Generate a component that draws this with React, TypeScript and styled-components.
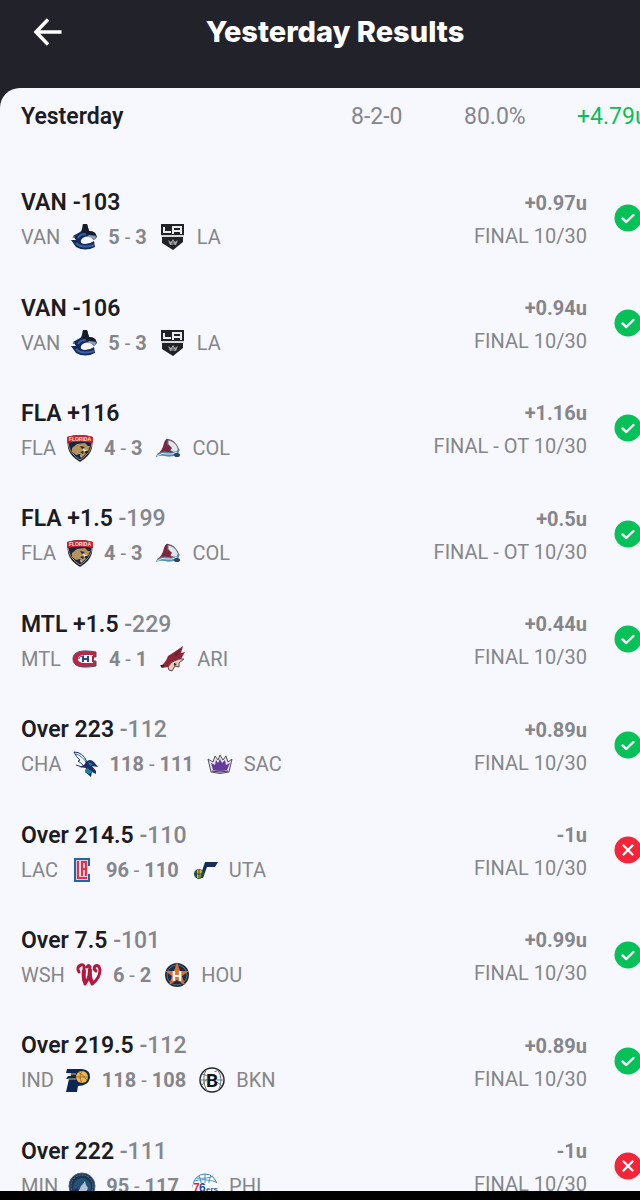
import React from "react";
import styled, { createGlobalStyle } from "styled-components";

const GlobalStyle = createGlobalStyle`
  * { box-sizing: border-box; }
  body { margin: 0; background: #000; font-family: Roboto, "Liberation Sans", sans-serif; }
`;

const Screen = styled.div`
  display: flex;
  flex-direction: column;
  height: 100vh;
  overflow: hidden;
  background: #22222b;
`;

const Header = styled.header`
  display: grid;
  grid-template-columns: 30px 1fr 33px;
  align-items: center;
  height: 64px;
  margin-bottom: 24px;
  padding-left: 33px;
  flex: none;
`;

const BackButton = styled.button`
  display: flex;
  width: 30px;
  height: 30px;
  padding: 0;
  border: 0;
  background: none;
  color: #fff;
`;

const Title = styled.h1`
  margin: 0;
  font-family: Inter, "Open Sans", sans-serif;
  font-size: 29px;
  line-height: 32px;
  font-weight: 800;
  color: #fff;
  text-align: center;
  white-space: nowrap;
`;

const Card = styled.main`
  display: flex;
  flex-direction: column;
  flex: 1;
  min-height: 0;
  overflow: hidden;
  border-top-left-radius: 20px;
  background: #f7f8fd;
`;

const Summary = styled.section`
  display: flex;
  align-items: center;
  flex: none;
  height: 58px;
  margin-bottom: 19px;
  padding-left: 21px;
  font-size: 23px;
  line-height: 28px;
  color: #85868b;
  white-space: nowrap;
`;

const SummaryTitle = styled.h2`
  flex: 1;
  margin: 0;
  font-size: 23px;
  font-weight: 600;
  color: #1c1c22;
`;

const Stat = styled.span<{ $width: number; $positive?: boolean }>`
  flex: none;
  width: ${(p) => p.$width}px;
  ${(p) => p.$positive && "color: #05c158;"}
`;

const Scroller = styled.div`
  flex: 1;
  min-height: 0;
  overflow-x: hidden;
  overflow-y: auto;
  scrollbar-width: none;
`;

const List = styled.ul`
  display: grid;
  grid-auto-rows: 1fr;
  min-height: calc(100% + 28px);
  margin: 0;
  padding: 0;
  list-style: none;
`;

const Row = styled.li`
  display: grid;
  grid-template-columns: 1fr auto 26px;
  align-items: center;
  column-gap: 27px;
  padding-left: 21px;
  white-space: nowrap;
`;

const Bet = styled.div`
  padding-top: 5px;
`;

const Pick = styled.h3`
  margin: 0 0 4px;
  font-size: 23px;
  line-height: 30px;
  font-weight: 600;
  color: #1c1c22;
`;

const Odds = styled.span`
  color: #85868b;
  font-weight: 500;
`;

const Matchup = styled.div`
  display: flex;
  align-items: center;
  gap: 10px;
  height: 30px;
  font-size: 20px;
  color: #85868b;
`;

const Score = styled.span`
  padding-right: 2px;
  font-weight: 700;
`;

const Dash = styled.span`
  font-weight: 400;
`;

const Outcome = styled.div`
  padding-top: 3px;
  text-align: right;
  font-size: 20px;
  line-height: 30px;
  color: #85868b;
`;

const Units = styled.div`
  margin-bottom: 3px;
  font-weight: 700;
`;

const Badge = styled.svg`
  display: block;
  width: 28px;
  height: 28px;
`;

const LogoSvg = styled.svg`
  display: block;
  flex: none;
  width: 28px;
  height: 28px;
`;

const SystemBar = styled.footer`
  flex: none;
  height: 9px;
  background: #000;
`;

const art: Record<string, React.ReactNode> = {
  VAN: (
    <>
      <path d="M10 9Q12 8 13 1H17L19 8Q26 8 27 14L24 17L21 14Q14 12 11 17Q10 21 15 21Q20 21 24 18L25 24Q15 29 6 24L1 17L6 17L3 13Z" fill="#142b58" />
      <path d="M6 20Q12 26 24 22M8 15Q10 11 16 11" fill="none" stroke="#3a61a3" strokeWidth="2" />
      <path d="M12 9L13 1H17L19 8Q25 8 26 12L20 12Z" fill="#161c28" />
      <path d="M19 12L26 13L25 17Q22 14 17 14Z" fill="#8f9db4" />
      <path d="M2 15L5 13L4 15Z" fill="#6d86b4" />
    </>
  ),
  LA: (
    <>
      <path d="M2 1H25V12H2ZM3 14H24V19L14 27L3 20Z" fill="#202225" />
      <path d="M5 4V9H12M14 11V4H22V11M14 8H22" fill="none" stroke="#e9ebed" strokeWidth="2" />
      <path d="M2 13H25" stroke="#b4b7bb" strokeWidth="1" />
      <path d="M9 17L12 19L14 16L16 19L19 17L17 22H11Z" fill="#a3a6aa" />
      <path d="M12 21H16M14 18V22" stroke="#4b4e51" strokeWidth="1" />
    </>
  ),
  FLA: (
    <>
      <path d="M1 3Q14 -1 27 3L26 14Q24 22 14 28Q4 22 2 14Z" fill="#182543" />
      <path d="M1 3Q14 -1 27 3V9Q14 6 1 9Z" fill="#cc2430" />
      <path d="M2 9Q3 19 14 26Q25 19 26 9" fill="none" stroke="#a58a58" strokeWidth="1" />
      <text x="14" y="7" textAnchor="middle" fontFamily="Liberation Sans" fontSize="5" fontWeight="700" fill="#ffe0ce">FLORIDA</text>
      <path d="M6 14L11 10L19 9L22 12L24 12L22 17L18 17L20 20L16 23L14 20L10 21L6 18Z" fill="#b5935b" />
      <path d="M14 12L19 13L16 15ZM18 17L14 18L17 20Z" fill="#192440" />
      <path d="M17 15L21 16L18 18ZM14 21L16 22L15 24Z" fill="#f7edd8" />
    </>
  ),
  COL: (
    <>
      <path d="M3 20Q8 18 10 9Q12 4 14 5Q22 6 25 16Q23 21 18 20Q13 16 4 21Z" fill="#7d263e" />
      <path d="M14 6Q21 7 24 14Q25 19 19 18Q16 17 13 13L14 10Z" fill="#dfe6ee" stroke="#568099" strokeWidth="1" />
      <path d="M14 10L18 14L15 18L10 17Z" fill="#7d263e" />
      <path d="M2 22Q7 16 14 18Q20 20 26 15L24 20Q17 24 11 22Q6 21 2 23Z" fill="#568bab" />
      <path d="M3 22Q8 18 13 20Q18 21 23 18" fill="none" stroke="#dce8f1" strokeWidth="1" />
      <ellipse cx="23" cy="21" rx="3" ry="2" fill="#27465b" />
    </>
  ),
  MTL: (
    <>
      <path d="M25 7V12H22Q20 10 15 10Q8 10 8 14Q8 18 15 18Q20 18 22 16H25V21Q2 25 2 14Q2 3 25 7Z" fill="#c02440" stroke="#42507e" strokeWidth="1" />
      <path d="M7 14Q7 10 14 10H22V18H14Q7 18 7 14Z" fill="#f6f7fb" />
      <path d="M12 11V17M17 11V17M12 14H17" stroke="#294882" strokeWidth="2" />
      <path d="M22 11V17" stroke="#b71f3b" strokeWidth="2" />
      <path d="M8 14Q8 11 13 11" fill="none" stroke="#294882" strokeWidth="1" />
    </>
  ),
  ARI: (
    <>
      <path d="M2 21Q7 17 9 11Q14 8 24 1L22 8L26 7L22 14L18 16L12 18L9 22L3 23Z" fill="#8c2537" />
      <path d="M13 17L20 14L25 14L20 18L20 22L16 21L13 26L10 25L9 22Z" fill="#e2cdb8" stroke="#6b4247" strokeWidth="1" />
      <path d="M15 10L21 4L18 11Z" fill="#64202c" />
      <path d="M15 18L18 19L15 21Z" fill="#242027" />
      <path d="M1 20L5 20L3 23Z" fill="#20242b" />
    </>
  ),
  CHA: (
    <>
      <path d="M2 2Q11 2 15 12L17 15L13 17Q8 12 6 11L8 10Q4 7 2 2Z" fill="#f5fafb" stroke="#242d65" strokeWidth="1" />
      <path d="M4 4Q11 6 15 14" fill="none" stroke="#2d82a1" strokeWidth="1" />
      <path d="M14 12Q18 8 22 12L26 17L20 16L24 21V24L20 22L19 27L13 22L14 18L7 17L12 15Z" fill="#1c2e65" />
      <path d="M16 12L21 14L18 16ZM15 18L21 22L17 24L13 22Z" fill="#1685a0" />
      <path d="M10 17L4 15" fill="none" stroke="#26325e" strokeWidth="1" />
    </>
  ),
  SAC: (
    <>
      <path d="M2 9L7 12L9 6L12 10L14 5L17 10L20 6L22 12L26 9L23 22Q14 25 5 22Z" fill="#e4e1e8" stroke="#535059" strokeWidth="1" />
      <path d="M5 13L9 15L10 10L12 13L14 9L16 13L19 10L20 15L24 13L21 20Q14 22 7 20Z" fill="#663b9d" />
      <path d="M6 21Q14 23 22 21" fill="none" stroke="#353139" strokeWidth="1" />
    </>
  ),
  LAC: (
    <>
      <path d="M6 2H22V10H19V18H22V26H6Z" fill="#1b68aa" />
      <path d="M8 4H20V24H8Z" fill="#f5c3ce" />
      <path d="M10 5V22H19M14 20V6H18V20M14 13H18" fill="none" stroke="#e0304c" strokeWidth="2" />
      <path d="M12 5V20" stroke="#fff" strokeWidth="1" />
    </>
  ),
  UTA: (
    <>
      <path d="M14 6H27L24 11H16L12 22H10L11 15Z" fill="#142e57" />
      <ellipse cx="8" cy="18" rx="5" ry="5" fill="#24513d" />
      <path d="M6 14Q9 12 11 15L9 22L6 22Z" fill="#eab32e" />
      <path d="M8 13V23M3 18H12" fill="none" stroke="#274c50" strokeWidth="1" />
    </>
  ),
  WSH: (
    <>
      <path d="M4 11Q1 6 6 4Q10 3 9 9Q8 17 10 23Q15 17 15 6Q14 3 12 6M15 6Q14 16 17 23Q25 17 25 9Q24 3 20 5Q18 8 21 10" fill="none" stroke="#b4173b" strokeWidth="3" strokeLinecap="round" strokeLinejoin="round" />
      <path d="M9 9Q8 17 10 21M15 8Q14 16 17 21" fill="none" stroke="#b4173b" strokeWidth="4" />
    </>
  ),
  HOU: (
    <>
      <circle cx="14" cy="14" r="12" fill="#182e4b" />
      <circle cx="14" cy="14" r="10" fill="none" stroke="#6b6a69" strokeWidth="1" />
      <path d="M14 1L17 10H26L19 15L22 24L14 19L6 24L9 15L2 10H11Z" fill="#dd702b" />
      <text x="14" y="20" textAnchor="middle" fontFamily="Liberation Sans" fontSize="14" fontWeight="700" fill="#fff">H</text>
    </>
  ),
  IND: (
    <>
      <path d="M3 3H18Q27 4 26 12Q24 20 14 20L13 26H2L5 13H2L4 10H7V7H2Z" fill="#0d2852" />
      <circle cx="18" cy="11" r="6" fill="#f3b748" />
      <path d="M12 11H24M18 5Q14 11 18 17M14 6Q20 9 23 14" fill="none" stroke="#9b733c" strokeWidth="1" />
      <path d="M4 8H12M4 13H12" fill="none" stroke="#e1b450" strokeWidth="1" />
    </>
  ),
  BKN: (
    <>
      <circle cx="14" cy="14" r="12" fill="#f7f8fa" stroke="#23282b" strokeWidth="1.5" />
      <path d="M4 8Q12 10 24 20M20 4Q12 8 4 19M2 14H26M8 4Q3 14 9 25M20 4Q26 14 20 25" fill="none" stroke="#69757b" strokeWidth="1" />
      <rect x="9" y="6" width="10" height="16" rx="2" fill="#f7f8fa" />
      <text x="14" y="21" textAnchor="middle" fontFamily="Roboto" fontSize="19" fontWeight="700" fill="#101619">B</text>
    </>
  ),
  MIN: (
    <>
      <circle cx="14" cy="14" r="13" fill="#1b3453" stroke="#4a5e72" strokeWidth="1" />
      <circle cx="14" cy="14" r="11" fill="none" stroke="#60788e" strokeWidth="1" strokeDasharray="2 1" />
      <circle cx="14" cy="15" r="9" fill="#245178" />
      <path d="M9 23L13 14L15 12L17 9L18 13L20 16L18 20L19 24Z" fill="#b2c2cf" />
      <path d="M6 18L10 16L9 22Z" fill="#162c43" />
    </>
  ),
  PHI: (
    <>
      <circle cx="14" cy="14" r="12" fill="#fff" stroke="#3782bd" strokeWidth="1" />
      <path d="M3 9Q14 6 25 10M14 2V26M5 6Q17 7 22 4M6 22Q14 19 22 22M8 4Q12 11 9 24M20 4Q16 9 19 24" fill="none" stroke="#4d91c5" strokeWidth="1" />
      <rect x="2" y="11" width="25" height="9" fill="#fff" />
      <text x="2" y="20" fontFamily="Liberation Sans" fontSize="12" fontWeight="700" fill="#e31e45">7</text>
      <text x="8" y="20" fontFamily="Liberation Sans" fontSize="12" fontWeight="700" fill="#17539e">6</text>
      <text x="15" y="20" fontFamily="Liberation Sans" fontSize="8" fontWeight="700" fill="#17539e">ers</text>
    </>
  ),
};

function Logo({ team }: { team: string }) {
  return <LogoSvg viewBox="0 0 28 28" aria-hidden="true">{art[team]}</LogoSvg>;
}

function Status({ won }: { won: boolean }) {
  return (
    <Badge viewBox="0 0 28 28" role="img" aria-label={won ? "Won" : "Lost"}>
      <circle cx="14" cy="14" r="13.5" fill={won ? "#05c158" : "#f42538"} />
      <path
        d={won ? "M8.5 14.5L12.3 18L19.5 11" : "M9.5 9.5L18.5 18.5M18.5 9.5L9.5 18.5"}
        fill="none"
        stroke="#fff"
        strokeWidth="2.4"
        strokeLinecap="round"
        strokeLinejoin="round"
      />
    </Badge>
  );
}

type BetResult = {
  pick: string;
  odds?: string;
  away: string;
  home: string;
  score: [number, number];
  units: string;
  status?: string;
  won?: boolean;
};

const bets: BetResult[] = [
  { pick: "VAN -103", away: "VAN", home: "LA", score: [5, 3], units: "+0.97u" },
  { pick: "VAN -106", away: "VAN", home: "LA", score: [5, 3], units: "+0.94u" },
  { pick: "FLA +116", away: "FLA", home: "COL", score: [4, 3], units: "+1.16u", status: "FINAL - OT 10/30" },
  { pick: "FLA +1.5", odds: "-199", away: "FLA", home: "COL", score: [4, 3], units: "+0.5u", status: "FINAL - OT 10/30" },
  { pick: "MTL +1.5", odds: "-229", away: "MTL", home: "ARI", score: [4, 1], units: "+0.44u" },
  { pick: "Over 223", odds: "-112", away: "CHA", home: "SAC", score: [118, 111], units: "+0.89u" },
  { pick: "Over 214.5", odds: "-110", away: "LAC", home: "UTA", score: [96, 110], units: "-1u", won: false },
  { pick: "Over 7.5", odds: "-101", away: "WSH", home: "HOU", score: [6, 2], units: "+0.99u" },
  { pick: "Over 219.5", odds: "-112", away: "IND", home: "BKN", score: [118, 108], units: "+0.89u" },
  { pick: "Over 222", odds: "-111", away: "MIN", home: "PHI", score: [95, 117], units: "-1u", won: false },
];

export default function App() {
  return (
    <Screen>
      <GlobalStyle />
      <Header>
        <BackButton type="button" aria-label="Back">
          <svg width="30" height="30" viewBox="0 0 30 30" fill="none" stroke="currentColor" strokeWidth="3.5">
            <path d="M28.5 15H3.5M15 2.5L3 15L15 27.5" />
          </svg>
        </BackButton>
        <Title>Yesterday Results</Title>
      </Header>
      <Card>
        <Summary>
          <SummaryTitle>Yesterday</SummaryTitle>
          <Stat $width={113}>8-2-0</Stat>
          <Stat $width={113}>80.0%</Stat>
          <Stat $width={63} $positive>+4.79u</Stat>
        </Summary>
        <Scroller>
          <List>
            {bets.map((bet) => (
              <Row key={bet.pick + bet.units}>
                <Bet>
                  <Pick>
                    {bet.pick}
                    {bet.odds && <Odds> {bet.odds}</Odds>}
                  </Pick>
                  <Matchup>
                    <span>{bet.away}</span>
                    <Logo team={bet.away} />
                    <Score>
                      {bet.score[0]}
                      <Dash> - </Dash>
                      {bet.score[1]}
                    </Score>
                    <Logo team={bet.home} />
                    <span>{bet.home}</span>
                  </Matchup>
                </Bet>
                <Outcome>
                  <Units>{bet.units}</Units>
                  <div>{bet.status ?? "FINAL 10/30"}</div>
                </Outcome>
                <Status won={bet.won ?? true} />
              </Row>
            ))}
          </List>
        </Scroller>
      </Card>
      <SystemBar />
    </Screen>
  );
}
